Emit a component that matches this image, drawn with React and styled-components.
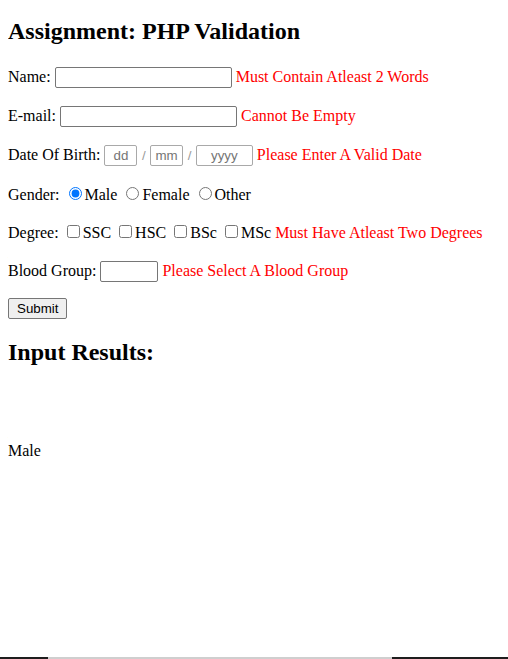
import React from "react";
import styled, { createGlobalStyle } from "styled-components";

const Global = createGlobalStyle`
  html, body { margin: 0; padding: 0; background: #fff; }
  body {
    margin: 8px;
    font-family: "Liberation Serif", "Times New Roman", serif;
    font-size: 16px;
    color: #000;
  }
`;

const Title = styled.h2`
  font-size: 24px;
  font-weight: bold;
  margin: ${(p) => p.$top}px 0 19.92px;
  line-height: normal;
`;

const Row = styled.p`
  margin: 16px 0;
  line-height: ${(p) => p.$lh || 23}px;
`;

const TextInput = styled.input`
  box-sizing: border-box;
  width: ${(p) => p.$w}px;
  height: 21px;
  padding: 1px 2px;
  border: 1px solid ${(p) => (p.$light ? "#a9a9a9" : "#767676")};
  border-radius: 2px;
  font-family: "Liberation Sans", Arial, sans-serif;
  font-size: 13.33px;
  text-align: ${(p) => (p.$center ? "center" : "left")};
  vertical-align: baseline;
  margin: 0;
  &::placeholder { color: #757575; }
`;

const Slash = styled.span`
  color: #9a9a9a;
  font-family: "Liberation Sans", Arial, sans-serif;
  font-size: 13.33px;
  margin: 0 4.5px;
`;

const Error = styled.span`
  color: #ff0000;
`;

const Choice = styled.input`
  margin: 3px 3px 0 5px;
  vertical-align: baseline;
`;

const Box = styled.input`
  margin: 3px 3px 3px 4px;
  vertical-align: baseline;
`;

const Button = styled.button`
  font-family: "Liberation Sans", Arial, sans-serif;
  font-size: 13.33px;
  padding: 1px 8px;
  border: 1px solid #767676;
  border-radius: 2px;
  background: #efefef;
  color: #000;
  height: 21px;
`;

const Results = styled.div`
  padding-top: 56px;
`;

const BottomBar = styled.div`
  position: fixed;
  left: 0;
  right: 0;
  bottom: 0;
  height: 2px;
  display: flex;
`;

const BarSeg = styled.div`
  width: ${(p) => (p.$grow ? "auto" : p.$w + "px")};
  flex: ${(p) => (p.$grow ? 1 : "none")};
  background: ${(p) => p.$c};
`;

export default function App() {
  return (
    <>
      <Global />
      <Title $top={10}>Assignment: PHP Validation</Title>
      <form onSubmit={(e) => e.preventDefault()}>
        <Row>
          Name: <TextInput $w={177} type="text" /> <Error>Must Contain Atleast 2 Words</Error>
        </Row>
        <Row>
          E-mail: <TextInput $w={177} type="text" /> <Error>Cannot Be Empty</Error>
        </Row>
        <Row>
          Date Of Birth: <TextInput $w={33} $light $center placeholder="dd" />
          <Slash>/</Slash>
          <TextInput $w={33} $light $center placeholder="mm" />
          <Slash>/</Slash>
          <TextInput $w={57} $light $center placeholder="yyyy" /> <Error>Please Enter A Valid Date</Error>
        </Row>
        <Row>
          Gender: <Choice type="radio" name="g" defaultChecked />Male{" "}
          <Choice type="radio" name="g" />Female{" "}
          <Choice type="radio" name="g" />Other
        </Row>
        <Row $lh={21}>
          Degree: <Box type="checkbox" />SSC <Box type="checkbox" />HSC <Box type="checkbox" />BSc{" "}
          <Box type="checkbox" />MSc <Error>Must Have Atleast Two Degrees</Error>
        </Row>
        <Row>
          Blood Group: <TextInput $w={58} type="text" /> <Error>Please Select A Blood Group</Error>
        </Row>
        <Button type="submit">Submit</Button>
      </form>
      <Title $top={19.92}>Input Results:</Title>
      <Results>Male</Results>
      <BottomBar>
        <BarSeg $w={48} $c="#1e1e1e" />
        <BarSeg $grow $c="#cfcfcf" />
        <BarSeg $w={116} $c="#1e1e1e" />
      </BottomBar>
    </>
  );
}
